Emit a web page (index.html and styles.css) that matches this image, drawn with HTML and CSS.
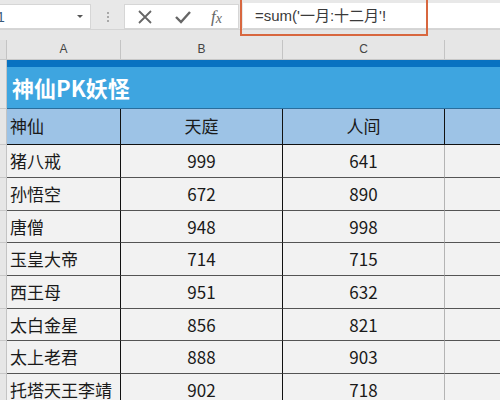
FILE: index.html
```html
<!DOCTYPE html>
<html lang="zh">
<head>
<meta charset="utf-8">
<link rel="stylesheet" href="styles.css">
</head>
<body>
<div class="app">
  <div class="toolbar">
    <div class="namebox"><span class="cellref">1</span><span class="caret"></span></div>
    <div class="grip"><i></i><i></i><i></i></div>
    <div class="fnbox">
      <svg class="ico" width="16" height="16" viewBox="0 0 16 16"><path d="M2 2 L14 14 M14 2 L2 14" stroke="#666" stroke-width="1.8" fill="none"/></svg>
      <svg class="ico" width="18" height="16" viewBox="0 0 18 16"><path d="M2 8 L7 13 L16 3" stroke="#666" stroke-width="2.4" fill="none"/></svg>
      <span class="fx">f<span class="fxx">x</span></span>
    </div>
    <div class="formula">=sum('一月:十二月'!</div>
    <div class="highlight"></div>
  </div>
  <div class="gap"></div>
  <div class="colheads">
    <div class="ch corner"></div>
    <div class="ch">A</div>
    <div class="ch">B</div>
    <div class="ch">C</div>
    <div class="ch last"></div>
  </div>
  <div class="sheet">
    <div class="rh"></div><div class="title">神仙PK妖怪</div>
    <div class="rh"></div>
    <div class="hd left">神仙</div><div class="hd">天庭</div><div class="hd">人间</div><div class="hd end"></div>

    <div class="rh"></div><div class="c left">猪八戒</div><div class="c">999</div><div class="c cc">641</div><div class="c end"></div>
    <div class="rh"></div><div class="c left">孙悟空</div><div class="c">672</div><div class="c cc">890</div><div class="c end"></div>
    <div class="rh"></div><div class="c left">唐僧</div><div class="c">948</div><div class="c cc">998</div><div class="c end"></div>
    <div class="rh"></div><div class="c left">玉皇大帝</div><div class="c">714</div><div class="c cc">715</div><div class="c end"></div>
    <div class="rh"></div><div class="c left">西王母</div><div class="c">951</div><div class="c cc">632</div><div class="c end"></div>
    <div class="rh"></div><div class="c left">太白金星</div><div class="c">856</div><div class="c cc">821</div><div class="c end"></div>
    <div class="rh"></div><div class="c left">太上老君</div><div class="c">888</div><div class="c cc">903</div><div class="c end"></div>
    <div class="rh"></div><div class="c left">托塔天王李靖</div><div class="c">902</div><div class="c cc">718</div><div class="c end"></div>
  </div>
</div>
</body>
</html>
```
FILE: styles.css
```css
* { box-sizing: border-box; }
html, body { margin: 0; padding: 0; }
body {
  width: 500px; height: 400px; overflow: hidden;
  background: #f2f2f2;
  font-family: "Noto Sans CJK SC", "Noto Sans", sans-serif;
  color: #1a1a1a;
}
.app { display: flex; flex-direction: column; width: 500px; }

.toolbar {
  position: relative;
  height: 30px;
  background: #e8e8e8;
  border-bottom: 1px solid #d4d4d4;
  display: flex;
  align-items: flex-start;
  padding-top: 4px;
}
.namebox {
  width: 91px; height: 25px;
  background: #fff;
  border: 1px solid #d6d6d6;
  border-left: none;
  display: flex; align-items: center; justify-content: space-between;
  padding-right: 7px;
}
.cellref { font-family: "Liberation Sans", sans-serif; font-size: 14px; color: #3a5a7a; margin-left: -3px; }
.caret {
  width: 0; height: 0;
  border-left: 3.5px solid transparent; border-right: 3.5px solid transparent;
  border-top: 3.5px solid #555;
}
.grip {
  width: 33px; height: 25px;
  display: flex; flex-direction: column; align-items: center; justify-content: center; gap: 2px;
}
.grip i { display: block; width: 2px; height: 2px; background: #a8a8a8; }
.fnbox {
  width: 115px; height: 25px;
  background: #fff;
  border: 1px solid #d6d6d6;
  display: flex; align-items: center;
  padding-left: 12px; gap: 21px;
}
.fx { font-family: "Liberation Serif", serif; font-style: italic; font-size: 17px; color: #666; line-height: 1; margin-left: -2px; }
.fxx { font-size: 14px; position: relative; top: 1px; }
.formula {
  flex: 1; height: 26px; margin-left: 4px; margin-top: -1px;
  background: #fff;
  border-bottom: 1px solid #d6d6d6;
  font-size: 15px; color: #3a3a3a;
  padding-left: 12px; line-height: 25px;
  font-family: "Liberation Sans", "Noto Sans CJK SC", sans-serif;
}
.highlight {
  position: absolute; left: 240px; top: -3px; width: 188px; height: 39px;
  border: 2px solid #d8673f;
}
.gap { height: 10px; background: #e6e6e6; }

.colheads {
  display: grid;
  grid-template-columns: 7px 114px 162px 162px 55px;
  height: 20px;
  background: #e6e6e6;
  border-bottom: 1px solid #c8c8c8;
}
.ch {
  border-right: 1px solid #c4c4c4;
  font-family: "Liberation Sans", sans-serif;
  font-size: 12px; color: #444;
  text-align: center; line-height: 19px;
}
.ch.corner { border-right: 1px solid #c4c4c4; background: #e0e0e0; }
.ch.last { border-right: none; }

.sheet {
  display: grid;
  grid-template-columns: 7px 114px 162px 162px 55px;
  grid-template-rows: 49px 36px 33px 33px 32px 33px 33px 32px 33px 33px;
}
.rh { background: #e6e6e6; border-right: 1px solid #c4c4c4; border-bottom: 1px solid #c8c8c8; }
.title {
  grid-column: 2 / 6;
  background: #3ea5e0;
  border-top: 7px solid #0872c1;
  border-bottom: 1px solid #2a6d9c;
  color: #fff;
  font-weight: 700; font-size: 22px;
  padding-left: 5px;
  line-height: 40px;
}
.hd {
  background: #9dc3e6;
  border-right: 1px solid #111;
  border-bottom: 1px solid #111;
  text-align: center; font-size: 17px;
  line-height: 34px;
  color: #1a1a1a;
}
.hd.end { border-right: none; }
.c {
  background: #f2f2f2;
  border-right: 1px solid #111;
  border-bottom: 1px solid #555;
  text-align: center; font-size: 17px;
  line-height: 31px;
}
.c.cc { border-right-color: #b4b4b4; }
.c.end { border-right: none; }
.left { text-align: left; padding-left: 3px; }
```
